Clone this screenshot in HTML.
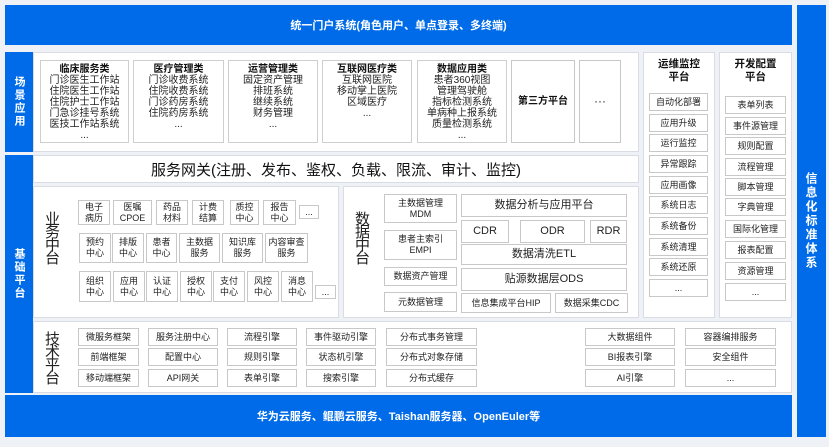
<!DOCTYPE html><html><head><meta charset="utf-8"><style>
*{margin:0;padding:0;box-sizing:border-box}
body{width:829px;height:447px;background:#eef2f7;position:relative;overflow:hidden;font-family:"Liberation Sans","Noto Sans CJK SC",sans-serif;color:#222}
div{position:absolute}
.blue{background:#006be8;color:#fff;display:flex;align-items:center;justify-content:center;font-weight:bold}
.p{background:#fff;border:1px solid #d9dde3}
.b{background:#fff;border:1px solid #c8c8c8;display:flex;align-items:center;justify-content:center;text-align:center;font-size:9px;line-height:11px;color:#222}
.v{font-size:15px;line-height:13px;width:15px;text-align:center;color:#222}
.lab{writing-mode:vertical-rl;font-size:11px;letter-spacing:2px}
.card{background:#fff;border:1px solid #cfcfcf;text-align:center;font-size:10px;line-height:11px;padding-top:3px}
.card b{font-size:10px;color:#111}
</style></head><body>
<div class="blue" style="left:5px;top:5px;width:787px;height:40px;font-size:11px">统一门户系统(角色用户、单点登录、多终端)</div>
<div class="blue lab" style="left:797px;top:5px;width:29px;height:432px;font-size:12px">信息化标准体系</div>

<div class="blue lab" style="left:5px;top:52px;width:28px;height:100px">场景应用</div>
<div class="p" style="left:33px;top:52px;width:606px;height:100px"></div>
<div class="card" style="left:40px;top:60px;width:89px;height:83px"><b>临床服务类</b><br>门诊医生工作站<br>住院医生工作站<br>住院护士工作站<br>门急诊挂号系统<br>医技工作站系统<br>...</div>
<div class="card" style="left:133px;top:60px;width:91px;height:83px"><b>医疗管理类</b><br>门诊收费系统<br>住院收费系统<br>门诊药房系统<br>住院药房系统<br>...</div>
<div class="card" style="left:228px;top:60px;width:90px;height:83px"><b>运营管理类</b><br>固定资产管理<br>排班系统<br>继续系统<br>财务管理<br>...</div>
<div class="card" style="left:322px;top:60px;width:90px;height:83px"><b>互联网医疗类</b><br>互联网医院<br>移动掌上医院<br>区域医疗<br>...</div>
<div class="card" style="left:417px;top:60px;width:90px;height:83px"><b>数据应用类</b><br>患者360视图<br>管理驾驶舱<br>指标检测系统<br>单病种上报系统<br>质量检测系统<br>...</div>
<div class="b" style="left:511px;top:60px;width:64px;height:83px;font-size:10px;font-weight:bold;color:#111">第三方平台</div>
<div class="b" style="left:579px;top:60px;width:42px;height:83px;font-size:12px">···</div>

<div class="p" style="left:643px;top:52px;width:72px;height:266px"></div>
<div style="left:643px;top:58px;width:72px;text-align:center;font-size:10.5px;font-weight:bold;line-height:13px;color:#111">运维监控<br>平台</div>
<div class="p" style="left:719px;top:52px;width:73px;height:266px"></div>
<div style="left:719px;top:58px;width:73px;text-align:center;font-size:10.5px;font-weight:bold;line-height:13px;color:#111">开发配置<br>平台</div>

<div class="blue lab" style="left:5px;top:155px;width:28px;height:238px">基础平台</div>
<div class="p" style="left:33px;top:155px;width:606px;height:28px;display:flex;align-items:center;justify-content:center;font-size:15px;color:#111">服务网关(注册、发布、鉴权、负载、限流、审计、监控)</div>
<div class="p" style="left:33px;top:186px;width:306px;height:132px"></div>
<div class="p" style="left:343px;top:186px;width:296px;height:132px"></div>
<div class="v" style="left:45px;top:213px">业<br>务<br>中<br>台</div>
<div class="v" style="left:355px;top:213px">数<br>据<br>中<br>台</div>

<div class="b" style="left:78px;top:200px;width:32px;height:25px">电子<br>病历</div>
<div class="b" style="left:113px;top:200px;width:39px;height:25px">医嘱<br>CPOE</div>
<div class="b" style="left:156px;top:200px;width:32px;height:25px">药品<br>材料</div>
<div class="b" style="left:192px;top:200px;width:32px;height:25px">计费<br>结算</div>
<div class="b" style="left:230px;top:200px;width:29px;height:25px">质控<br>中心</div>
<div class="b" style="left:263px;top:200px;width:33px;height:25px">报告<br>中心</div>
<div class="b" style="left:299px;top:205px;width:20px;height:14px">...</div>
<div class="b" style="left:79px;top:233px;width:32px;height:30px">预约<br>中心</div>
<div class="b" style="left:112px;top:233px;width:32px;height:30px">排版<br>中心</div>
<div class="b" style="left:146px;top:233px;width:31px;height:30px">患者<br>中心</div>
<div class="b" style="left:179px;top:233px;width:41px;height:30px">主数据<br>服务</div>
<div class="b" style="left:222px;top:233px;width:41px;height:30px">知识库<br>服务</div>
<div class="b" style="left:265px;top:233px;width:43px;height:30px">内容审查<br>服务</div>
<div class="b" style="left:79px;top:271px;width:32px;height:31px">组织<br>中心</div>
<div class="b" style="left:113px;top:271px;width:32px;height:31px">应用<br>中心</div>
<div class="b" style="left:146px;top:271px;width:32px;height:31px">认证<br>中心</div>
<div class="b" style="left:180px;top:271px;width:32px;height:31px">授权<br>中心</div>
<div class="b" style="left:213px;top:271px;width:32px;height:31px">支付<br>中心</div>
<div class="b" style="left:247px;top:271px;width:32px;height:31px">风控<br>中心</div>
<div class="b" style="left:281px;top:271px;width:32px;height:31px">消息<br>中心</div>
<div class="b" style="left:315px;top:285px;width:21px;height:14px">...</div>

<div class="b" style="left:384px;top:194px;width:73px;height:29px">主数据管理<br>MDM</div>
<div class="b" style="left:384px;top:230px;width:73px;height:30px">患者主索引<br>EMPI</div>
<div class="b" style="left:384px;top:267px;width:73px;height:19px">数据资产管理</div>
<div class="b" style="left:384px;top:292px;width:73px;height:20px">元数据管理</div>
<div class="b" style="left:461px;top:194px;width:166px;height:23px;font-size:11px">数据分析与应用平台</div>
<div class="b" style="left:461px;top:220px;width:48px;height:23px;font-size:11px">CDR</div>
<div class="b" style="left:520px;top:220px;width:65px;height:23px;font-size:11px">ODR</div>
<div class="b" style="left:590px;top:220px;width:37px;height:23px;font-size:11px">RDR</div>
<div class="b" style="left:461px;top:244px;width:166px;height:21px;font-size:11px">数据清洗ETL</div>
<div class="b" style="left:461px;top:268px;width:166px;height:23px;font-size:11px">贴源数据层ODS</div>
<div class="b" style="left:461px;top:293px;width:90px;height:20px">信息集成平台HIP</div>
<div class="b" style="left:555px;top:293px;width:73px;height:20px">数据采集CDC</div>

<div class="b" style="left:649px;top:93px;width:59px;height:18px">自动化部署</div>
<div class="b" style="left:649px;top:114px;width:59px;height:18px">应用升级</div>
<div class="b" style="left:649px;top:134px;width:59px;height:18px">运行监控</div>
<div class="b" style="left:649px;top:155px;width:59px;height:18px">异常跟踪</div>
<div class="b" style="left:649px;top:176px;width:59px;height:18px">应用画像</div>
<div class="b" style="left:649px;top:196px;width:59px;height:18px">系统日志</div>
<div class="b" style="left:649px;top:217px;width:59px;height:18px">系统备份</div>
<div class="b" style="left:649px;top:238px;width:59px;height:18px">系统清理</div>
<div class="b" style="left:649px;top:258px;width:59px;height:18px">系统还原</div>
<div class="b" style="left:649px;top:279px;width:59px;height:18px">...</div>

<div class="b" style="left:725px;top:96px;width:61px;height:18px">表单列表</div>
<div class="b" style="left:725px;top:117px;width:61px;height:18px">事件源管理</div>
<div class="b" style="left:725px;top:137px;width:61px;height:18px">规则配置</div>
<div class="b" style="left:725px;top:158px;width:61px;height:18px">流程管理</div>
<div class="b" style="left:725px;top:178px;width:61px;height:18px">脚本管理</div>
<div class="b" style="left:725px;top:198px;width:61px;height:18px">字典管理</div>
<div class="b" style="left:725px;top:220px;width:61px;height:18px">国际化管理</div>
<div class="b" style="left:725px;top:241px;width:61px;height:18px">报表配置</div>
<div class="b" style="left:725px;top:262px;width:61px;height:18px">资源管理</div>
<div class="b" style="left:725px;top:283px;width:61px;height:18px">...</div>

<div class="p" style="left:33px;top:321px;width:759px;height:72px"></div>
<div class="v" style="left:45px;top:333px">技<br>术<br>平<br>台</div>
<div class="b" style="left:78px;top:328px;width:61px;height:18px">微服务框架</div>
<div class="b" style="left:78px;top:348px;width:61px;height:18px">前端框架</div>
<div class="b" style="left:78px;top:369px;width:61px;height:18px">移动端框架</div>
<div class="b" style="left:148px;top:328px;width:70px;height:18px">服务注册中心</div>
<div class="b" style="left:148px;top:348px;width:70px;height:18px">配置中心</div>
<div class="b" style="left:148px;top:369px;width:70px;height:18px">API网关</div>
<div class="b" style="left:227px;top:328px;width:70px;height:18px">流程引擎</div>
<div class="b" style="left:227px;top:348px;width:70px;height:18px">规则引擎</div>
<div class="b" style="left:227px;top:369px;width:70px;height:18px">表单引擎</div>
<div class="b" style="left:306px;top:328px;width:70px;height:18px">事件驱动引擎</div>
<div class="b" style="left:306px;top:348px;width:70px;height:18px">状态机引擎</div>
<div class="b" style="left:306px;top:369px;width:70px;height:18px">搜索引擎</div>
<div class="b" style="left:386px;top:328px;width:91px;height:18px">分布式事务管理</div>
<div class="b" style="left:386px;top:348px;width:91px;height:18px">分布式对象存储</div>
<div class="b" style="left:386px;top:369px;width:91px;height:18px">分布式缓存</div>
<div class="b" style="left:585px;top:328px;width:90px;height:18px">大数据组件</div>
<div class="b" style="left:585px;top:348px;width:90px;height:18px">BI报表引擎</div>
<div class="b" style="left:585px;top:369px;width:90px;height:18px">AI引擎</div>
<div class="b" style="left:685px;top:328px;width:91px;height:18px">容器编排服务</div>
<div class="b" style="left:685px;top:348px;width:91px;height:18px">安全组件</div>
<div class="b" style="left:685px;top:369px;width:91px;height:18px">...</div>

<div class="blue" style="left:5px;top:395px;width:787px;height:42px;font-size:11px">华为云服务、鲲鹏云服务、Taishan服务器、OpenEuler等</div>
</body></html>
